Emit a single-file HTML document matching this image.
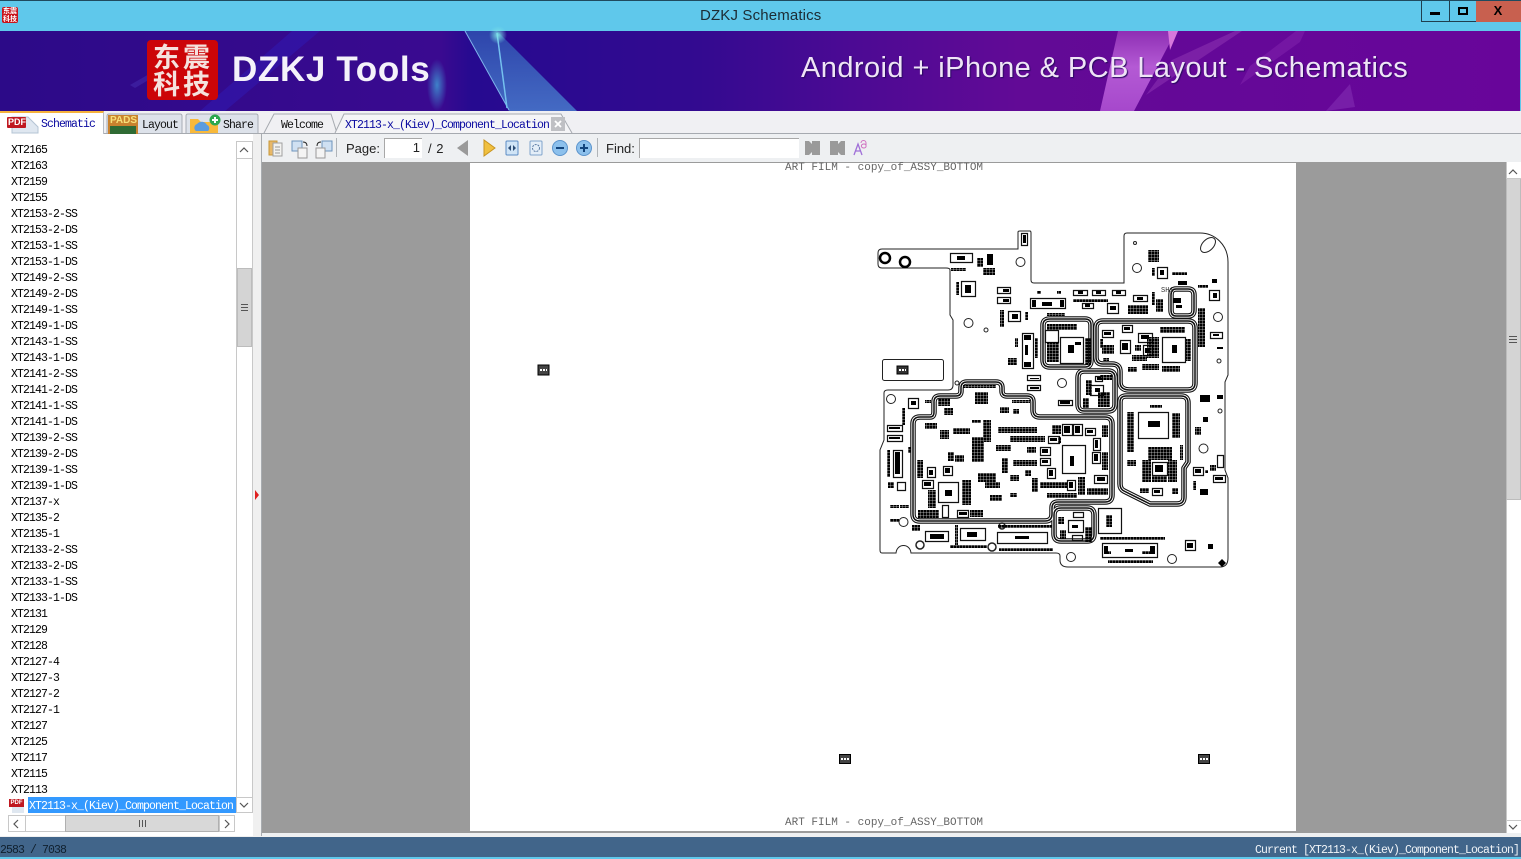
<!DOCTYPE html>
<html><head><meta charset="utf-8"><title>DZKJ Schematics</title>
<style>
*{box-sizing:border-box}
html,body{margin:0;padding:0;width:1521px;height:859px;overflow:hidden;background:#f0f0f0}
body{position:relative;font-family:"Liberation Sans",sans-serif}
.a{position:absolute}
.m{font-family:"Liberation Mono","Noto Sans CJK SC",monospace;font-size:11.5px;letter-spacing:-.9px;white-space:pre;line-height:16px}
#list{white-space:nowrap}
#list div{height:16px;padding-left:11px;color:#000}
svg{position:absolute;left:0;top:0;overflow:visible}
</style></head><body>
<div class="a" style="left:0;top:0;width:1521px;height:31px;background:#5fc8eb;border-top:1px solid #1f4a5e"></div>
<div class="a" style="left:2px;top:7px;width:16px;height:16px;background:#c8141c;border-radius:2px;color:#fff;font:bold 7px/8px 'Noto Sans CJK SC',sans-serif;text-align:center">东震<br>科技</div>
<div class="a" style="left:700px;top:7px;font-size:15px;line-height:17px;color:#1c2c34;letter-spacing:.15px;white-space:nowrap">DZKJ Schematics</div>
<div class="a" style="left:1421px;top:1px;width:100px;height:21px;background:#5fc8eb;border:1px solid #1f3e4e;border-top:0;border-right:0"></div>
<div class="a" style="left:1449px;top:1px;width:1px;height:21px;background:#1f3e4e"></div>
<div class="a" style="left:1476px;top:1px;width:45px;height:21px;background:#c8604f"></div>
<div class="a" style="left:1430px;top:12px;width:10px;height:3px;background:#000"></div>
<div class="a" style="left:1458px;top:7px;width:10px;height:8px;border:2px solid #000"></div>
<div class="a" style="left:1488px;top:2px;width:20px;font:bold 13px/18px 'Liberation Sans',sans-serif;color:#000;text-align:center">X</div>

<svg width="1521" height="111" viewBox="0 0 1521 111" style="left:0;top:0">
<defs>
<linearGradient id="bg" x1="0" x2="1" y1="0" y2="0"><stop offset="0" stop-color="#2c0a88"/><stop offset=".29" stop-color="#3a0a90"/><stop offset=".31" stop-color="#260a90"/><stop offset=".46" stop-color="#330a90"/><stop offset=".56" stop-color="#4c0a94"/><stop offset=".67" stop-color="#620a96"/><stop offset="1" stop-color="#68059a"/></linearGradient>
<linearGradient id="bw" x1="0" x2="0" y1="0" y2="1"><stop offset="0" stop-color="#2f4fb0" stop-opacity=".85"/><stop offset="1" stop-color="#4a82d0" stop-opacity=".8"/></linearGradient>
<linearGradient id="pk" x1="0" x2="0" y1="0" y2="1"><stop offset="0" stop-color="#8e2fb4"/><stop offset=".45" stop-color="#b45ad4"/><stop offset="1" stop-color="#a648cc"/></linearGradient>
<radialGradient id="gl"><stop offset="0" stop-color="#3fa0d8" stop-opacity=".8"/><stop offset="1" stop-color="#3fa0d8" stop-opacity="0"/></radialGradient>
<radialGradient id="gs"><stop offset="0" stop-color="#7fe8e8" stop-opacity=".9"/><stop offset="1" stop-color="#7fe8e8" stop-opacity="0"/></radialGradient>
</defs>
<rect y="31" width="1521" height="80" fill="url(#bg)"/>
<path d="M200 111L292 31H320L225 111Z" fill="#3216a8" opacity=".75"/>
<path d="M130 85L205 42L209 44L135 88Z" fill="#4a34b4" opacity=".45"/>
<ellipse cx="437" cy="85" rx="10" ry="26" fill="url(#gl)"/>
<path d="M465 31L509 111H577L497 31Z" fill="url(#bw)"/>
<path d="M465 31L509 110" stroke="#7fb4ec" stroke-width="1" fill="none"/>
<path d="M497 33L507 108" stroke="#74c0ee" stroke-width="1.500" fill="none"/>
<circle cx="498" cy="35" r="9" fill="url(#gs)"/>
<path d="M1118 31H1176L1134 111H1100Z" fill="url(#pk)"/>
<path d="M1168 31H1178L1170 50Z" fill="#d878dc"/>
<path d="M1172 60L1235 31H1242L1146 95Z" fill="#8a30b0" opacity=".6"/>
<path d="M1240 85L1300 42L1305 31H1296L1250 66Z" fill="#7e22aa" opacity=".6"/>
<path d="M1326 111L1350 84L1355 107Z" fill="#7f28ae" opacity=".7"/>
<rect x="1520" y="31" width="1" height="80" fill="#5fc8eb"/>
</svg>
<div class="a" style="left:147px;top:40px;width:71px;height:60px;background:#cc0508;border-radius:4px"></div>
<div class="a" style="left:153px;top:42px;width:62px;font:bold 27px/27px 'Noto Sans CJK SC',sans-serif;color:#f5e2de;letter-spacing:3px;white-space:nowrap">东震<br>科技</div>
<div class="a" style="left:232px;top:49px;font-size:35px;font-weight:bold;line-height:42px;color:#f4f2fa;letter-spacing:.65px;white-space:nowrap">DZKJ Tools</div>
<div class="a" style="left:801px;top:50px;font-size:29px;line-height:36px;color:#efe4f6;letter-spacing:.43px;white-space:nowrap;text-shadow:1px 1px 1px #2a0a60">Android + iPhone &amp; PCB Layout - Schematics</div>

<!-- tab bar -->
<div class="a" style="left:0;top:111px;width:1521px;height:23px;background:#f0f0f3;border-bottom:1px solid #a6aab0"></div>
<div class="a" style="left:262px;top:134px;width:1259px;height:28px;background:#eef0f2"></div>
<div class="a" style="left:0;top:134px;width:262px;height:702px;background:#f0f0f0"></div>
<div class="a" style="left:0;top:111px;width:104px;height:24px;background:#fff;border-top:2px solid #f5b13c;border-right:1px solid #b8bcc4"></div>
<svg width="260" height="135" viewBox="0 0 260 135">
<path d="M12 117H28L38 127V133H12Z" fill="#dfe7f0" stroke="#b4c4d4"/>
<rect x="7" y="117" width="19" height="11" rx="1" fill="#c01820"/>
<path d="M107 133V116Q107 114 109 114H180Q182 114 182 116V133" fill="#dde2ea" stroke="#a8acb4"/>
<path d="M186 133V116Q186 114 188 114H256Q258 114 258 116V133" fill="#dde2ea" stroke="#a8acb4"/>
<rect x="108" y="115" width="30" height="19" fill="#c9822e"/><rect x="110" y="126" width="26" height="8" fill="#2f6b34"/>
<path d="M190 119H198L201 122H218V133H190Z" fill="#f8b93a"/>
<path d="M196 131a4 4 0 0 1 1-7a6 6 0 0 1 10 1a3.500 3.500 0 0 1 1 6Z" fill="#5a9ce0"/>
<circle cx="215" cy="120" r="5.500" fill="#2ca84e"/><path d="M212 120h6M215 117v6" stroke="#fff" stroke-width="2"/>
</svg>
<div class="a" style="left:8px;top:118px;font:bold 9px/9px 'Liberation Sans',sans-serif;color:#fff">PDF</div>
<div class="a" style="left:110px;top:115px;font:bold 10px/11px 'Liberation Sans',sans-serif;color:#f6e07a">PADS</div>
<div class="a m" style="left:41px;top:117px;color:#0a0aa0">Schematic</div>
<div class="a m" style="left:142px;top:118px;color:#111">Layout</div>
<div class="a m" style="left:223px;top:118px;color:#111">Share</div>

<svg width="600" height="135" viewBox="0 0 600 135">
<path d="M264 133L274 114H331L337 133" fill="#f0f0f3" stroke="#a6aab0"/>
<path d="M335 133L344 114H561L572 133" fill="#f5f5f7" stroke="#a6aab0"/>
<rect x="551" y="117" width="14" height="14" fill="#bfc0c4"/>
<path d="M555 121l6 6M561 121l-6 6" stroke="#fff" stroke-width="1.800"/>
</svg>
<div class="a m" style="left:281px;top:118px;color:#111">Welcome</div>
<div class="a m" style="left:345px;top:118px;color:#0a0aa0">XT2113-x_(Kiev)_Component_Location</div>

<!-- toolbar -->
<svg width="900" height="162" viewBox="0 0 900 162">
<rect x="269" y="141" width="8" height="14" fill="#e8b868" stroke="#c89838"/>
<path d="M273 143h9v13h-9z" fill="#f2f2f0" stroke="#a0a0a0"/><path d="M275 147h5M275 150h5M275 153h5" stroke="#999"/>
<path d="M292 141h10v10h-10z" fill="#cfe0f2" stroke="#6e94bc"/><path d="M298 148h9v10h-9z" fill="#f4f4f4" stroke="#999"/><path d="M303 142q4 0 4 4" stroke="#222" fill="none"/>
<path d="M322 141h10v10h-10z" fill="#cfe0f2" stroke="#6e94bc"/><path d="M316 148h9v10h-9z" fill="#f4f4f4" stroke="#999"/><path d="M321 142q-4 0-4 4" stroke="#222" fill="none"/>
<path d="M336.500 138v19M597.500 138v19" stroke="#b0b4b8"/>
<path d="M468 140V156L457 148Z" fill="#9a9a9a"/>
<path d="M484 140V156L495 148Z" fill="#f0c040" stroke="#c89420"/>
<rect x="506" y="141" width="12" height="14" rx="1" fill="#d0e4f6" stroke="#5c8cc4"/><path d="M511 145v6l-3-3ZM513 145v6l3-3Z" fill="#2c4c74"/>
<rect x="530" y="141" width="12" height="14" rx="1" fill="#e4eef8" stroke="#80a4cc"/><circle cx="536" cy="148" r="3.500" fill="none" stroke="#5c7ca4" stroke-dasharray="2 1"/>
<circle cx="560" cy="148" r="7.500" fill="#8cc0ec" stroke="#5c94cc"/><path d="M556 148h8" stroke="#12447c" stroke-width="2"/>
<circle cx="584" cy="148" r="7.500" fill="#8cc0ec" stroke="#5c94cc"/><path d="M580 148h8M584 144v8" stroke="#12447c" stroke-width="2"/>
<path d="M805 141h4l3 3v-3h8v14h-8v-3l-3 3h-4z" fill="#9a9a9a"/>
<path d="M830 141h8v3l3-3h4v14h-4l-3-3v3h-8z" fill="#9a9a9a"/>
<path d="M854 155l4-11l4 11M855.500 151h5" stroke="#a070d8" stroke-width="1.300" fill="none"/><path d="M861 143a2.500 2.500 0 1 1 5 0v4M866 145a2.500 2 0 1 0 0 2" stroke="#d070c0" fill="none"/>
</svg>
<div class="a" style="left:346px;top:141px;font-size:13px;line-height:15px;color:#222;letter-spacing:0">Page:</div>
<div class="a" style="left:384px;top:138px;width:38px;height:20px;background:#fff;border-left:1px solid #a8a8a8;border-top:1px solid #a8a8a8;font-size:13px;line-height:18px;text-align:right;padding-right:2px;color:#222">1</div>
<div class="a" style="left:428px;top:141px;font-size:13px;line-height:15px;color:#222;letter-spacing:.5px">/ 2</div>
<div class="a" style="left:606px;top:141px;font-size:13px;line-height:15px;color:#222">Find:</div>
<div class="a" style="left:639px;top:138px;width:160px;height:20px;background:#fff;border-left:1px solid #a8a8a8;border-top:1px solid #a8a8a8"></div>

<!-- list -->
<div class="a" style="left:0;top:134px;width:253px;height:702px;background:#fff"></div>
<div id="list" class="a m" style="left:0;top:143px;width:237px"><div>XT2165</div><div>XT2163</div><div>XT2159</div><div>XT2155</div><div>XT2153-2-SS</div><div>XT2153-2-DS</div><div>XT2153-1-SS</div><div>XT2153-1-DS</div><div>XT2149-2-SS</div><div>XT2149-2-DS</div><div>XT2149-1-SS</div><div>XT2149-1-DS</div><div>XT2143-1-SS</div><div>XT2143-1-DS</div><div>XT2141-2-SS</div><div>XT2141-2-DS</div><div>XT2141-1-SS</div><div>XT2141-1-DS</div><div>XT2139-2-SS</div><div>XT2139-2-DS</div><div>XT2139-1-SS</div><div>XT2139-1-DS</div><div>XT2137-x</div><div>XT2135-2</div><div>XT2135-1</div><div>XT2133-2-SS</div><div>XT2133-2-DS</div><div>XT2133-1-SS</div><div>XT2133-1-DS</div><div>XT2131</div><div>XT2129</div><div>XT2128</div><div>XT2127-4</div><div>XT2127-3</div><div>XT2127-2</div><div>XT2127-1</div><div>XT2127</div><div>XT2125</div><div>XT2117</div><div>XT2115</div><div>XT2113</div></div>
<div class="a m" style="left:28px;top:797px;width:208px;height:16px;background:#3399ff;color:#fff;padding:2px 0 0 1px">XT2113-x_(Kiev)_Component_Location</div>
<div class="a" style="left:12px;top:805px;width:12px;height:8px;background:#dfe7f0"></div>
<div class="a" style="left:9px;top:799px;width:15px;height:8px;background:#c01820;color:#fff;font:bold 6px/8px 'Liberation Sans',sans-serif;text-align:center">PDF</div>

<!-- list scrollbars -->
<div class="a" style="left:236px;top:141px;width:17px;height:672px;background:#fff;border:1px solid #c8c8c8"></div>
<div class="a" style="left:237px;top:268px;width:15px;height:79px;background:#d4d4d4;border:1px solid #bcbcbc"></div>
<div class="a" style="left:8px;top:815px;width:227px;height:17px;background:#fff;border:1px solid #c8c8c8"></div>
<div class="a" style="left:65px;top:815px;width:154px;height:17px;background:#d8d8d8;border:1px solid #b0b0b0"></div>
<svg width="262" height="836" viewBox="0 0 262 836">
<path d="M240 152l4-4l4 4M240 803l4 4l4-4M18 820l-4 4l4 4M225 820l4 4l-4 4" stroke="#555" fill="none" stroke-width="1.200"/>
<path d="M237 158.500h15M237 797.500h15M25.500 815v17M219.500 815v17" stroke="#c8c8c8"/>
<path d="M241 304.500h7M241 307.500h7M241 310.500h7M139.500 820v7M142.500 820v7M145.500 820v7" stroke="#555"/>
<path d="M255 490l4 5l-4 5Z" fill="#e02020"/>
</svg>
<div class="a" style="left:261px;top:134px;width:1px;height:702px;background:#a8acb0"></div>

<!-- viewer -->
<div class="a" style="left:262px;top:162px;width:1244px;height:671px;background:#9b9b9b"></div>
<div class="a" style="left:470px;top:163px;width:826px;height:668px;background:#fff;overflow:hidden"></div>
<div class="a" style="left:262px;top:833px;width:1259px;height:3px;background:#eef0f2"></div>
<div class="a" style="left:1506px;top:162px;width:15px;height:671px;background:#fff;border-left:1px solid #c8c8c8"></div>
<div class="a" style="left:1506px;top:178px;width:15px;height:322px;background:#d4d4d4;border:1px solid #bcbcbc"></div>
<svg width="1521" height="859" viewBox="0 0 1521 859">
<path d="M1509 174l4-4l4 4M1509 825l4 4l4-4" stroke="#555" fill="none" stroke-width="1.200"/>
<path d="M1509 336.500h8M1509 339.500h8M1509 342.500h8" stroke="#555"/>
<path d="M1506 178.500h15M1506 820.500h15" stroke="#c8c8c8"/>
</svg>
<div class="a" style="left:785px;top:162px;font:11px/12px 'Liberation Mono',monospace;color:#666;white-space:pre">ART FILM - copy_of_ASSY_BOTTOM</div>
<div class="a" style="left:785px;top:817px;font:11px/12px 'Liberation Mono',monospace;color:#666;white-space:pre">ART FILM - copy_of_ASSY_BOTTOM</div>

<!-- board -->
<svg width="1521" height="859" viewBox="0 0 1521 859">
<defs><pattern id="d" width="3" height="3" patternUnits="userSpaceOnUse"><rect width="2.700" height="2.700" fill="#000"/></pattern></defs>
<rect x="538" y="365" width="11" height="10" fill="#444" stroke="#000"/><path d="M540 370h7" stroke="#fff" stroke-width="2" stroke-dasharray="2 1"/>
<rect x="839.500" y="754.500" width="11" height="9" fill="#444" stroke="#000"/><path d="M841 759h8" stroke="#fff" stroke-width="2" stroke-dasharray="2 1"/>
<rect x="1198.500" y="754.500" width="11" height="9" fill="#444" stroke="#000"/><path d="M1200 759h8" stroke="#fff" stroke-width="2" stroke-dasharray="2 1"/>
<rect x="882.500" y="359.500" width="61" height="21" rx="2" fill="none" stroke="#222"/>
<rect x="897" y="366" width="11" height="8" fill="#333" stroke="#000"/><path d="M899 370h7" stroke="#fff" stroke-width="2" stroke-dasharray="2 1"/>
<!-- outline -->
<path d="M882 249H1018V232Q1018 231 1020 231H1030Q1031 231 1031 233V280Q1031 283 1034 283H1124V236Q1124 233 1127 233H1200C1215 233 1228 245 1228 262V375L1225 382V470L1228 478V558Q1228 567 1220 567H1068Q1060 567 1060 560V556Q1060 553 1056 553H911C910 543 897 543 896 553H882Q880 553 880 550V450L884 440V393Q884 390 888 390H948Q953 390 953 385V320L950 315V270Q950 268 946 268H882Q878 268 878 264V253Q878 249 882 249Z" fill="none" stroke="#222" stroke-width="1"/>
<!-- shields -->
<g fill="none" stroke-linejoin="round">
<g stroke="#111" stroke-width="5.500">
<path id="s1" d="M1050 319H1085Q1091 319 1091 325V360Q1091 367 1085 367H1050Q1043 367 1043 360V325Q1043 319 1050 319Z"/>
<path id="s2" d="M1103 321H1188Q1195 321 1195 328V383Q1195 390 1188 390H1130Q1120 390 1120 382V372Q1120 364 1112 364H1103Q1096 364 1096 357V328Q1096 321 1103 321Z"/>
<path id="s3" d="M1176 289H1188Q1194 289 1194 295V310Q1194 316 1188 316H1176Q1171 316 1171 310V295Q1171 289 1176 289Z"/>
<path id="s4" d="M1084 371H1108Q1115 371 1115 378V404Q1115 411 1108 411H1084Q1078 411 1078 404V378Q1078 371 1084 371Z"/>
<path id="s5" d="M1126 396H1181Q1188 396 1188 403V462L1184 468V497Q1184 504 1177 504H1150L1124 491Q1120 489 1120 484V402Q1120 396 1126 396Z"/>
<path id="s6" d="M920 417H930Q934 417 934 412V402Q934 396 940 396H956Q961 396 961 391V388Q961 382 967 382H996Q1002 382 1002 388V391Q1002 396 1007 396H1027Q1033 396 1033 402V410Q1033 417 1040 417H1105Q1112 417 1112 424V495Q1112 502 1105 502H1058Q1052 502 1052 508V514Q1052 521 1045 521H920Q913 521 913 514V424Q913 417 920 417Z"/>
<path id="s7" d="M1061 508H1087Q1094 508 1094 515V534Q1094 541 1087 541H1061Q1054 541 1054 534V515Q1054 508 1061 508Z"/>
</g>
<g stroke="#fff" stroke-width="3.300"><use href="#s1"/><use href="#s2"/><use href="#s3"/><use href="#s4"/><use href="#s5"/><use href="#s6"/><use href="#s7"/></g>
<g stroke="#111" stroke-width="1.500"><use href="#s1"/><use href="#s2"/><use href="#s3"/><use href="#s4"/><use href="#s5"/><use href="#s6"/><use href="#s7"/></g>
</g>
<!-- circles -->
<g fill="none" stroke="#222">
<circle cx="1137" cy="268" r="4.500"/><circle cx="1135" cy="243" r="1.500"/><circle cx="1020.500" cy="262" r="4.500"/><circle cx="968.500" cy="323" r="4.500"/><circle cx="986" cy="330" r="2"/><circle cx="1218" cy="317" r="4.500"/><circle cx="1062" cy="383" r="4.500"/><circle cx="1219" cy="361" r="2"/><circle cx="957" cy="383" r="2"/><circle cx="891" cy="399" r="4.500"/><circle cx="1203.500" cy="448.500" r="4.500"/><circle cx="903.500" cy="522" r="4.500"/><circle cx="1071" cy="557" r="4.500"/><circle cx="1172" cy="559" r="4.500"/><circle cx="1220" cy="411" r="2"/>
<ellipse cx="1208" cy="245" rx="9" ry="5.500" transform="rotate(-45 1208 245)"/>
<circle cx="885" cy="258" r="5" stroke="#000" stroke-width="2.500"/><circle cx="905" cy="262" r="5" stroke="#000" stroke-width="2.500"/>
<circle cx="920" cy="545" r="4" stroke-width="1.500"/><circle cx="992" cy="547" r="4" stroke-width="1.500"/><circle cx="1002" cy="526" r="3" stroke-width="1.500"/>
</g>
<!-- outlined parts -->
<path fill="none" stroke="#111" stroke-width="1.200" d="M950.500 253.500h22v9h-22zM961.500 281.500h14v15h-14zM997.500 287.500h13v6h-13zM997.500 297.500h13v6h-13zM1030.500 298.500h35v10h-35zM1008.500 311.500h12v10h-12zM1073.500 290.500h14v5h-14zM1092.500 290.500h13v5h-13zM1112.500 290.500h13v5h-13zM1082.500 303.500h11v5h-11zM1107.500 303.500h11v10h-11zM1133.500 295.500h14v6h-14zM1157.500 267.500h10v11h-10zM1209.500 290.500h10v10h-10zM1021.500 233.500h6v12h-6zM1060.500 337.500h23v26h-23zM1045.500 330.500h13v12h-13zM1162.500 337.500h23v25h-23zM1102.500 330.500h11v7h-11zM1122.500 325.500h10v7h-10zM1138.500 333.500h14v9h-14zM1120.500 340.500h10v13h-10zM1143.500 345.500h9v10h-9zM1210.500 332.500h12v6h-12zM1138.500 412.500h30v26h-30zM1152.500 462.500h15v13h-15zM1152.500 488.500h10v7h-10zM1062.500 445.500h23v28h-23zM938.500 482.500h20v20h-20zM927.500 467.500h8v10h-8zM943.500 466.500h9v9h-9zM922.500 480.500h11v8h-11zM1062.500 424.500h10v11h-10zM1073.500 424.500h9v11h-9zM1085.500 428.500h10v7h-10zM1093.500 438.500h7v12h-7zM1092.500 452.500h8v11h-8zM1048.500 436.500h11v7h-11zM1040.500 447.500h10v8h-10zM1040.500 458.500h10v7h-10zM1047.500 468.500h8v10h-8zM1067.500 480.500h8v10h-8zM1094.500 475.500h13v8h-13zM1068.500 520.500h15v12h-15zM1073.500 512.500h10v5h-10zM1072.500 535.500h10v5h-10zM1098.500 508.500h23v25h-23zM1102.500 543.500h55v14h-55zM960.500 528.500h25v12h-25zM997.500 532.500h50v11h-50zM925.500 531.500h23v10h-23zM887.500 425.500h15v6h-15zM887.500 435.500h15v6h-15zM893.500 450.500h9v27h-9zM908.500 398.500h10v10h-10zM897.500 482.500h8v8h-8zM1193.500 467.500h10v8h-10zM1213.500 475.500h12v7h-12zM1217.500 455.500h6v12h-6zM1185.500 540.500h10v10h-10zM957.500 510.500h11v7h-11zM942.500 505.500h6v12h-6zM1022.500 333.500h11v35h-11zM1058.500 400.500h14v5h-14zM1027.500 375.500h13v5h-13zM1027.500 385.500h13v5h-13zM1090.500 385.500h13v10h-13zM1095.500 376.500h7v5h-7z"/>
<!-- solid -->
<path fill="#000" d="M1023 235h3v8h-3zM987 254h6v11h-6zM965 285h6v8h-6zM1178 281h9v4h-9zM1212 279h5v4h-5zM1213 293h4v5h-4zM1068 345h6v8h-6zM1172 345h5v8h-5zM1148 421h12v6h-12zM1070 456h4v10h-4zM945 490h7v6h-7zM1203 417h5v5h-5zM1222 559l4 4l-4 4l-4-4zM1200 395h10v7h-10zM1217 395h6v4h-6zM1208 544h5v5h-5zM1187 543h6v5h-6zM1200 489h8v6h-8zM1075 342h6v3h-6zM1217 347h6v2h-6zM957 256h8v4h-8zM1003 289h6v3h-6zM1003 299h6v3h-6zM1042 302h10v4h-10zM1032 300h4v7h-4zM1060 300h4v7h-4zM1012 314h6v5h-6zM1078 291h5v3h-5zM1096 291h5v3h-5zM1116 291h5v3h-5zM1085 304h5v3h-5zM1110 306h6v4h-6zM1137 297h6v3h-6zM1160 270h4v5h-4zM1104 332h7v3h-7zM1124 327h6v3h-6zM1141 335h8v4h-8zM1122 343h6v7h-6zM1145 348h5v5h-5zM1213 334h6v2h-6zM889 427h11v2h-11zM889 437h11v2h-11zM895 452h5v22h-5zM911 401h5v4h-5zM1195 469h6v4h-6zM1215 477h8v3h-8zM1064 426h6v7h-6zM1075 426h5v7h-5zM1087 430h6v3h-6zM1095 440h3v8h-3zM1094 454h4v7h-4zM1050 438h7v3h-7zM1042 449h6v4h-6zM1042 460h6v3h-6zM1049 470h4v6h-4zM1069 482h4v6h-4zM1097 477h8v4h-8zM929 470h4v5h-4zM945 468h5v5h-5zM924 482h7v4h-7zM967 532h10v5h-10zM1015 536h14v3h-14zM930 534h14v5h-14zM1104 546h4v8h-4zM1150 546h5v8h-5zM1125 549h8v3h-8zM1025 345h3v10h-3zM1024 335h7v5h-7zM1024 362h7v5h-7zM1095 388h5v4h-5zM1072 525h6v3h-6zM1030 378h9v1h-9zM1030 387h9v2h-9zM1060 401h10v3h-10zM1097 377h4v3h-4zM1173 298h8v5h-8zM1176 305h6v3h-6zM959 512h8v3h-8zM1154 490h6v3h-6zM1155 465h8v7h-8z"/>
<path fill="url(#d)" d="M951 268h15v3h-15zM977 258h6v9h-6zM983 268h12v7h-12zM956 282h3v13h-3zM1037 291h4v3h-4zM1057 291h4v3h-4zM1000 310h4v17h-4zM1025 312h3v8h-3zM1047 313h18v3h-18zM1073 299h35v3h-35zM1128 305h20v9h-20zM1152 292h3v13h-3zM1156 299h7v13h-7zM1148 250h11v12h-11zM1152 268h3v8h-3zM1172 272h15v3h-15zM1198 285h10v3h-10zM1047 324h30v6h-30zM1047 342h12v20h-12zM1085 338h6v27h-6zM1160 327h25v6h-25zM1102 345h12v9h-12zM1132 355h15v6h-15zM1147 337h12v21h-12zM1186 339h5v22h-5zM1142 364h17v6h-17zM1128 367h9v5h-9zM1162 366h18v6h-18zM1198 308h7v39h-7zM1015 338h3v9h-3zM1035 338h3v20h-3zM1008 358h9v7h-9zM1086 380h6v15h-6zM1100 375h12v5h-12zM1098 392h12v15h-12zM1083 398h6v10h-6zM1127 412h7v40h-7zM1172 413h8v25h-8zM1148 447h24v13h-24zM1142 460h9v22h-9zM1168 460h9v22h-9zM1152 476h15v6h-15zM1140 488h9v5h-9zM1172 488h6v6h-6zM1127 460h9v6h-9zM998 427h39v6h-39zM1010 436h35v6h-35zM1013 460h24v6h-24zM1040 482h27v6h-27zM1047 493h30v5h-30zM972 437h12v25h-12zM983 420h8v22h-8zM953 428h17v6h-17zM948 452h6v9h-6zM955 455h9v7h-9zM917 460h6v18h-6zM962 480h9v25h-9zM978 473h18v9h-18zM918 510h21v8h-21zM970 510h13v7h-13zM928 490h8v18h-8zM1032 478h6v14h-6zM1078 477h7v18h-7zM1087 488h21v7h-21zM1002 458h6v15h-6zM1010 493h7v4h-7zM996 445h15v6h-15zM1027 447h9v6h-9zM972 420h9v3h-9zM1085 527h7v15h-7zM1058 517h6v7h-6zM1060 530h6v9h-6zM998 525h54v3h-54zM1100 537h65v3h-65zM1108 560h45v3h-45zM955 525h3v20h-3zM950 545h37v3h-37zM999 548h54v3h-54zM912 525h8v6h-8zM887 450h3v27h-3zM902 408h3v17h-3zM925 400h6v3h-6zM1195 427h6v8h-6zM1193 481h3v9h-3zM1210 465h6v6h-6zM890 505h9v3h-9zM900 505h9v3h-9zM890 519h9v3h-9zM888 482h6v6h-6zM908 447h3v6h-3zM1106 515h6v12h-6zM1010 475h9v6h-9zM1105 551h6v3h-6zM1142 551h9v3h-9zM963 385h33v3h-33zM938 398h12v8h-12zM944 408h9v7h-9zM975 392h13v12h-13zM1012 400h18v3h-18zM1000 407h9v6h-9zM1013 409h6v5h-6zM1052 425h9v9h-9zM1102 425h6v12h-6zM1102 452h6v18h-6zM1058 437h3v6h-3zM1025 470h6v6h-6zM985 482h15v6h-15zM990 495h12v6h-12zM925 423h12v6h-12zM940 430h9v9h-9zM1135 345h6v6h-6zM1103 358h6v3h-6zM1100 339h3v9h-3zM1150 405h12v3h-12zM1180 445h3v15h-3zM1205 470h3v3h-3z"/>
<text x="1161" y="292" font-family="Liberation Mono,monospace" font-size="7" fill="#333">SH1</text>
</svg>

<!-- status -->
<div class="a" style="left:0;top:837px;width:1521px;height:20px;background:#41658a"></div>
<div class="a" style="left:0;top:857px;width:1521px;height:2px;background:#5fc8eb"></div>
<div class="a m" style="left:0;top:843px;color:#10202e">2583 / 7038</div>
<div class="a m" style="right:2px;top:843px;color:#f0f4f8">Current [XT2113-x_(Kiev)_Component_Location]</div>
</body></html>
